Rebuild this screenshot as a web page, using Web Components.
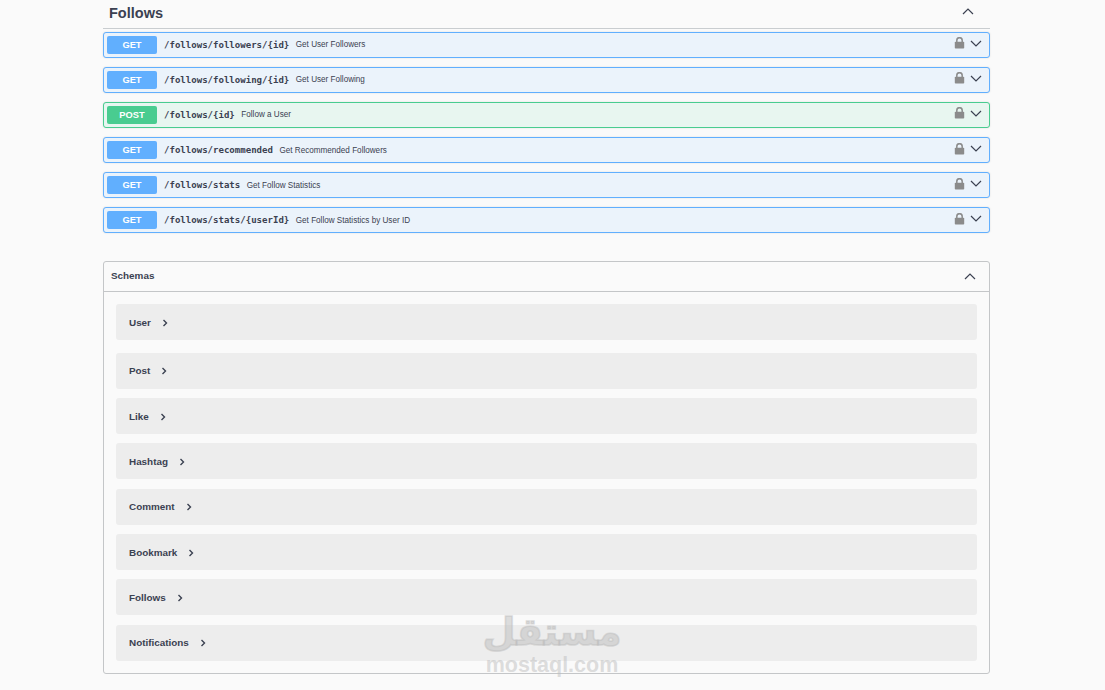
<!DOCTYPE html>
<html>
<head>
<meta charset="utf-8">
<title>Follows</title>
<style>
  html, body { margin: 0; padding: 0; background: #fafafa; }
  body { height: 690px; overflow: hidden; font-family: "Liberation Sans", sans-serif; color: #3b4151; }
</style>
</head>
<body>
<api-page>
  <tag-section name="Follows">
    <op-row method="GET" path="/follows/followers/{id}" summary="Get User Followers"></op-row>
    <op-row method="GET" path="/follows/following/{id}" summary="Get User Following"></op-row>
    <op-row method="POST" path="/follows/{id}" summary="Follow a User"></op-row>
    <op-row method="GET" path="/follows/recommended" summary="Get Recommended Followers"></op-row>
    <op-row method="GET" path="/follows/stats" summary="Get Follow Statistics"></op-row>
    <op-row method="GET" path="/follows/stats/{userId}" summary="Get Follow Statistics by User ID"></op-row>
  </tag-section>
  <schema-box>
    <schema-row>User</schema-row>
    <schema-row>Post</schema-row>
    <schema-row>Like</schema-row>
    <schema-row>Hashtag</schema-row>
    <schema-row>Comment</schema-row>
    <schema-row>Bookmark</schema-row>
    <schema-row>Follows</schema-row>
    <schema-row>Notifications</schema-row>
  </schema-box>
  <water-mark></water-mark>
</api-page>

<script>
const chevronUp = `<svg width="12" height="7" viewBox="0 0 12 7" fill="none" stroke="#3b4151" stroke-width="1.2"><path d="M1 6 6 1l5 5"/></svg>`
const chevronDown = `<svg width="12" height="7" viewBox="0 0 12 7" fill="none" stroke="#3b4151" stroke-width="1.2"><path d="M1 1l5 5 5-5"/></svg>`
const lock = `<svg width="11" height="12" viewBox="0 0 11 12"><path d="M2.8 5.5V3.4a2.7 2.7 0 0 1 5.4 0v2.1" fill="none" stroke="#8b8b8b" stroke-width="1.5"/><rect x=".8" y="4.8" width="9.4" height="6.8" rx=".8" fill="#8b8b8b"/></svg>`

class ApiPage extends HTMLElement {
  constructor() {
    super()
    this.attachShadow({ mode: 'open' }).innerHTML = `
      <style>
        :host { display: block; position: relative; width: 887px; margin-left: 103px; height: 690px; }
      </style>
      <slot></slot>`
  }
}

class TagSection extends HTMLElement {
  constructor() {
    super()
    this.attachShadow({ mode: 'open' }).innerHTML = `
      <style>
        :host { display: block; }
        header {
          display: flex; justify-content: space-between; align-items: center;
          height: 28.5px; box-sizing: border-box; padding: 0 16px 5px 6px;
          border-bottom: 1px solid #c9cdd0;
        }
        h3 { margin: 3px 0 0; font: 700 14.5px "Liberation Sans", sans-serif; color: #3b4151; }
        svg { display: block; }
        .ops { padding-top: 3px; }
      </style>
      <header><h3>${this.getAttribute('name')}</h3>${chevronUp}</header>
      <div class="ops"><slot></slot></div>`
  }
}

class OpRow extends HTMLElement {
  constructor() {
    super()
    const method = this.getAttribute('method')
    const post = method === 'POST'
    this.attachShadow({ mode: 'open' }).innerHTML = `
      <style>
        :host { display: block; margin-bottom: 9.2px; }
        .row {
          display: flex; align-items: center; height: 26px; box-sizing: border-box; padding: 0 7px 0 3px;
          border: 1px solid ${post ? '#49cc90' : '#61affe'}; border-radius: 3px;
          background: ${post ? '#e8f6f0' : '#ebf3fb'};
          box-shadow: 0 0 2px rgba(0,0,0,.12);
        }
        .method {
          width: 50px; height: 18px; text-align: center; border-radius: 2px;
          background: ${post ? '#49cc90' : '#61affe'}; color: #fff;
          font: 700 9.3px/18px "Liberation Sans", sans-serif;
        }
        .path {
          margin-left: 7px; font: 700 9.05px "DejaVu Sans Mono", monospace; color: #3b4151;
        }
        .summary { margin-left: 6.5px; font: 400 8.15px "Liberation Sans", sans-serif; color: #3b4151; flex: 1; }
        .lock { display: block; margin-right: 5px; margin-top: -3px; }
        .lock svg { display: block; }
        .arrow { display: block; margin-top: -3px; }
        .arrow svg { display: block; }
      </style>
      <div class="row">
        <span class="method">${method}</span>
        <span class="path">${this.getAttribute('path')}</span>
        <span class="summary">${this.getAttribute('summary')}</span>
        <span class="lock">${lock}</span>
        <span class="arrow">${chevronDown}</span>
      </div>`
  }
}

class SchemaBox extends HTMLElement {
  constructor() {
    super()
    this.attachShadow({ mode: 'open' }).innerHTML = `
      <style>
        :host {
          display: block; margin-top: 28px; height: 413px; box-sizing: border-box;
          border: 1px solid #c4c6c8; border-radius: 3px;
        }
        header {
          display: flex; justify-content: space-between; align-items: center;
          height: 30px; box-sizing: border-box; padding: 0 13px 3px 7px;
          border-bottom: 1px solid #c4c6c8;
          font: 700 9.9px "Liberation Sans", sans-serif; color: #3b4151;
        }
        svg { display: block; margin-top: 3px; }
        .list { display: flex; flex-direction: column; gap: 9.33px; padding: 12px 12px 0; }
      </style>
      <header><span>Schemas</span>${chevronUp}</header>
      <div class="list"><slot></slot></div>`
  }
}

class SchemaRow extends HTMLElement {
  constructor() {
    super()
    this.attachShadow({ mode: 'open' }).innerHTML = `
      <style>
        :host {
          display: flex; align-items: center; gap: 11px; height: 36px; padding-left: 13px;
          background: #ededed; border-radius: 3px;
          font: 700 9.9px "Liberation Sans", sans-serif; color: #3b4151;
        }
        :host(:first-child) { margin-bottom: 3px; }
        svg { display: block; margin-top: 1px; }
      </style>
      <slot></slot>
      <svg width="6" height="8" viewBox="0 0 6 8" fill="none" stroke="#3b4151" stroke-width="1.4"><path d="M1.5 1 4.5 4l-3 3"/></svg>`
  }
}

// stock watermark sits over the last rows of the schemas box
class WaterMark extends HTMLElement {
  constructor() {
    super()
    this.attachShadow({ mode: 'open' }).innerHTML = `
      <style>
        :host {
          display: block; position: absolute; left: 376px; top: 608px; width: 146px;
          text-align: center; color: rgba(190,190,190,.5); pointer-events: none;
        }
        .ar { font: 700 38px/48px "DejaVu Sans", sans-serif; -webkit-text-stroke: 1.6px rgba(190,190,190,.5); }
        .en { font: 700 21.5px/22px "Liberation Sans", sans-serif; margin-top: -2px; }
      </style>
      <div class="ar" dir="rtl" lang="ar">مستقل</div>
      <div class="en">mostaql.com</div>`
  }
}

customElements.define('api-page', ApiPage)
customElements.define('tag-section', TagSection)
customElements.define('op-row', OpRow)
customElements.define('schema-box', SchemaBox)
customElements.define('schema-row', SchemaRow)
customElements.define('water-mark', WaterMark)
</script>
</body>
</html>
